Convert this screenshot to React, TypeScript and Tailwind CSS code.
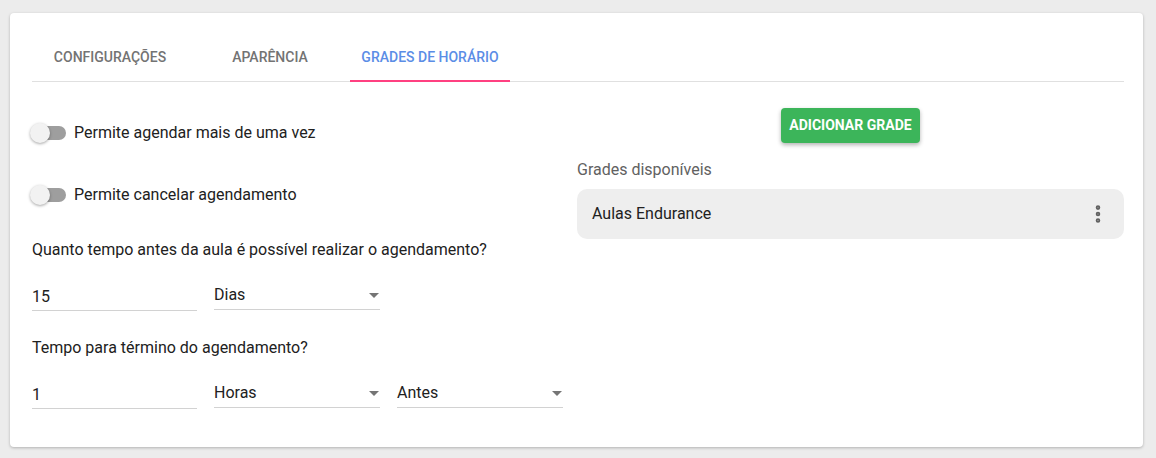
import { EllipsisVertical } from 'lucide-react'

const tabs = ['Configurações', 'Aparência', 'Grades de horário']

function Toggle({ label }: { label: string }) {
  return (
    <div className="flex h-[38px] items-center pt-[2px]">
      <div className="relative h-[20px] w-[38px] shrink-0">
        <div className="absolute left-[4px] top-[3px] h-[14px] w-[30px] rounded-full bg-[#9e9e9e]" />
        <div className="absolute -left-[2px] top-0 h-[20px] w-[20px] rounded-full bg-[#f2f2f2] shadow-[0_1px_3px_rgba(0,0,0,0.35)]" />
      </div>
      <span className="ml-[4px] text-[16px] text-[#212121]">{label}</span>
    </div>
  )
}

function TextInput({ value, width }: { value: string; width: string }) {
  return (
    <div className={`${width} flex h-[32px] items-end border-b border-[#d2d2d2] pb-[1px]`}>
      <span className="text-[16px] leading-[24px] text-[#212121]">{value}</span>
    </div>
  )
}

function Select({ value }: { value: string }) {
  return (
    <div className="flex h-[31px] w-[166px] items-center justify-between border-b border-[#d2d2d2] pt-[2px]">
      <span className="text-[16px] leading-[24px] text-[#212121]">{value}</span>
      <svg width="10" height="5" viewBox="0 0 10 5" className="mr-[1px]">
        <path d="M0 0h10L5 5z" fill="#757575" />
      </svg>
    </div>
  )
}

export default function App() {
  return (
    <div className="h-[458px] w-[1156px] bg-[#ececec] pt-[13px] font-['Roboto',sans-serif]">
      <div className="ml-[10px] h-[434px] w-[1133px] rounded-[4px] bg-white pl-[22px] pr-[19px] shadow-[0_1px_3px_rgba(0,0,0,0.25)]">
        <div className="pt-[20px]">
          <div className="flex h-[49px] border-b border-[#e0e0e0]">
            <div className="-ml-[2px] flex">
              {tabs.map((t, i) => (
                <div
                  key={t}
                  className={`relative flex h-[48px] w-[160px] items-center justify-center text-[14px] font-medium uppercase ${
                    i === 2 ? 'text-[#5b8de6]' : 'text-[#737373]'
                  }`}
                >
                  {t}
                  {i === 2 && <div className="absolute bottom-[-1px] left-0 h-[2px] w-full bg-[#ff4081]" />}
                </div>
              ))}
            </div>
          </div>
        </div>

        <div className="flex">
          <div className="w-[531px]">
            <div className="mt-[31px]">
              <Toggle label="Permite agendar mais de uma vez" />
            </div>
            <div className="mt-[24px]">
              <Toggle label="Permite cancelar agendamento" />
            </div>
            <p className="mt-[25px] text-[16px] leading-[24px] text-[#212121]">
              Quanto tempo antes da aula é possível realizar o agendamento?
            </p>
            <div className="mt-[17px] flex items-start gap-[17px]">
              <TextInput value="15" width="w-[165px]" />
              <Select value="Dias" />
            </div>
            <p className="mt-[25px] text-[16px] leading-[24px] text-[#212121]">
              Tempo para término do agendamento?
            </p>
            <div className="mt-[17px] flex items-start gap-[17px]">
              <TextInput value="1" width="w-[165px]" />
              <Select value="Horas" />
              <Select value="Antes" />
            </div>
          </div>

          <div className="ml-[14px] w-[547px]">
            <div className="mt-[26px] flex justify-center">
              <button className="h-[35px] rounded-[4px] bg-[#3cb55a] px-[8px] text-[14px] font-bold uppercase text-white shadow-[0_2px_4px_rgba(0,0,0,0.3)]">
                Adicionar grade
              </button>
            </div>
            <p className="mt-[15px] text-[16px] leading-[24px] text-[#616161]">Grades disponíveis</p>
            <div className="mt-[7px] flex h-[50px] items-center justify-between rounded-[10px] bg-[#eeeeee] pl-[15px] pr-[15px]">
              <span className="text-[16px] text-[#212121]">Aulas Endurance</span>
              <EllipsisVertical size={22} strokeWidth={3} className="text-[#616161]" />
            </div>
          </div>
        </div>
      </div>
    </div>
  )
}
